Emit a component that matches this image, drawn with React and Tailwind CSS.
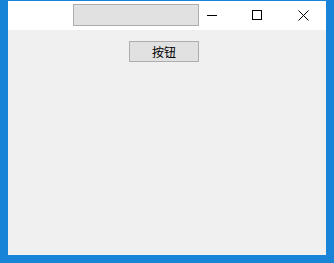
import React from 'react'

const App = () => {
  return (
    <div className="w-[334px] h-[263px] bg-[#1884d8] pt-px px-[8px] pb-[8px] flex flex-col">
      {/* title bar */}
      <div className="h-[29px] bg-white flex items-start">
        <div className="ml-[65px] mt-[3px] w-[126px] h-[22px] bg-[#e1e1e1] border border-[#adadad]"></div>
        <svg className="ml-[8px] mt-[9px]" width="10" height="10" viewBox="0 0 10 10">
          <rect x="0" y="5" width="10" height="1" fill="#000" />
        </svg>
        <svg className="ml-[35px] mt-[9px]" width="10" height="10" viewBox="0 0 10 10">
          <rect x="0.5" y="0.5" width="9" height="9" fill="none" stroke="#000" strokeWidth="1" />
        </svg>
        <svg className="ml-[36px] mt-[9px]" width="11" height="11" viewBox="0 0 11 11">
          <path d="M0.5 0.5 L10.5 10.5 M10.5 0.5 L0.5 10.5" stroke="#000" strokeWidth="1" />
        </svg>
      </div>
      {/* client area */}
      <div className="flex-1 bg-[#f0f0f0]">
        <button
          className="ml-[121px] mt-[11px] w-[70px] h-[21px] bg-[#e1e1e1] border border-[#adadad] text-[12px] leading-none text-black flex items-center justify-center"
          style={{ fontFamily: '"Noto Sans CJK SC", sans-serif' }}
        >
          按钮
        </button>
      </div>
    </div>
  )
}

export default App
